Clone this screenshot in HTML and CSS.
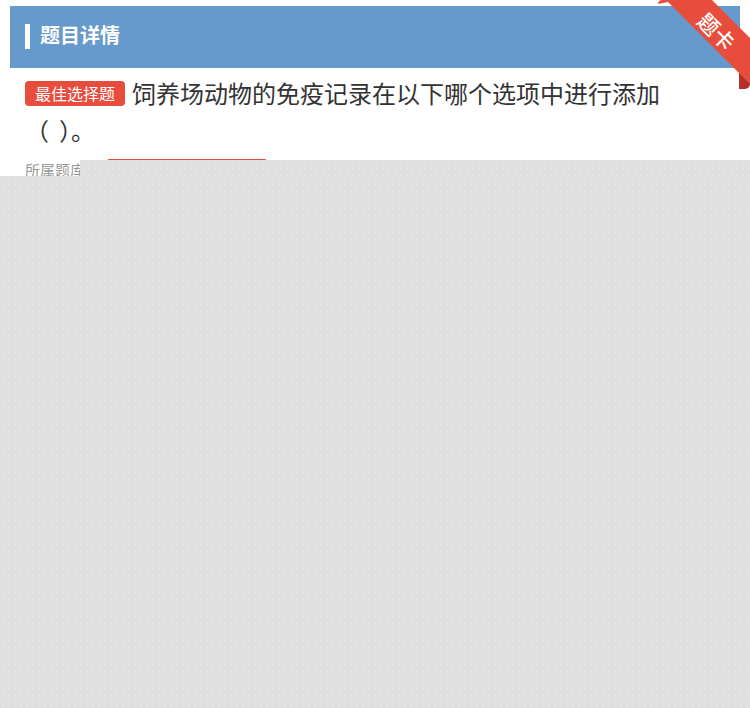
FILE: index.html
```html
<!DOCTYPE html>
<html lang="zh">
<head>
<meta charset="utf-8">
<title>题目详情</title>
<link rel="stylesheet" href="styles.css">
</head>
<body>
<div class="page">
  <div class="card">
    <div class="card-head">
      <span class="head-bar"></span>
      <h2 class="head-title">题目详情</h2>
    </div>
    <div class="question">
      <span class="badge">最佳选择题</span>饲养场动物的免疫记录在以下哪个选项中进行添加（<span class="blank"> </span>）。
    </div>
    <div class="meta">
      <span class="meta-label">所属题库：</span>
      <span class="meta-bank"></span>
    </div>
  </div>
</div>
<div class="ribbon">
  <svg width="92" height="92" viewBox="0 0 92 92">
    <rect x="81" y="60" width="11" height="29" rx="5" fill="#b5302a"/>
    <rect x="81" y="60" width="6" height="29" fill="#b5302a"/>
    <path d="M6,0 L54,0 L92,38 L92,84 L10,2 Q4,2 2,0 Z" fill="#e74c3c"/>
    <path d="M0,4 Q0,0 6,0 L10,2 Z" fill="#e74c3c"/>
    <text class="ribbon-text" x="0" y="0" transform="translate(59 31) rotate(45)" text-anchor="middle">题卡</text>
  </svg>
</div>
<div class="mask mask-upper"></div>
<div class="mask mask-lower"></div>
</body>
</html>
```

FILE: styles.css
```css
html, body {
  margin: 0;
  padding: 0;
  background: #ffffff;
}
body {
  font-family: "Noto Sans CJK SC", "Noto Sans", sans-serif;
  position: relative;
  min-height: 708px;
  overflow: hidden;
}
.page {
  padding: 6px 10px 0;
}
.card {
  background: #ffffff;
}
.card-head {
  height: 62px;
  background: #6699cc;
  display: flex;
  align-items: center;
  padding-left: 15px;
}
.head-bar {
  width: 5px;
  height: 25px;
  background: #ffffff;
  margin-right: 10px;
  margin-bottom: 2px;
}
.head-title {
  margin: 0 0 5px;
  font-size: 20px;
  font-weight: bold;
  color: #ffffff;
  line-height: 26px;
}
.question {
  padding: 6px 65px 0 15px;
  font-size: 24px;
  line-height: 37px;
  color: #333333;
}
.blank {
  display: inline-block;
  width: 10px;
}
.badge {
  display: inline-block;
  font-size: 16px;
  line-height: 25px;
  height: 25px;
  padding: 0 10px;
  margin-right: 7px;
  border-radius: 4px;
  background: #e74c3c;
  color: #ffffff;
  vertical-align: 3px;
}
.meta {
  margin-top: 9px;
  padding-left: 15px;
  height: 24px;
  display: flex;
  align-items: center;
  font-size: 15px;
  color: #999999;
}
.meta-label {
  margin-right: 7px;
}
.meta-bank {
  width: 158px;
  height: 18px;
  border: 1px solid #e74c3c;
  border-radius: 2px;
}
.ribbon {
  position: absolute;
  top: 0;
  right: 0;
  width: 92px;
  height: 92px;
}
.ribbon svg {
  display: block;
}
.ribbon-text {
  font-family: "Noto Sans CJK SC", sans-serif;
  font-size: 21px;
  font-weight: 500;
  fill: #ffffff;
  dominant-baseline: central;
}
.mask {
  position: absolute;
  right: 0;
  bottom: 0;
  background-color: #dfdfdf;
  background-image: radial-gradient(circle, #e4e4e4 0.9px, transparent 1.1px);
  background-size: 6px 6px;
}
.mask-upper {
  top: 160px;
  left: 80px;
}
.mask-lower {
  top: 176px;
  left: 0;
}
```
